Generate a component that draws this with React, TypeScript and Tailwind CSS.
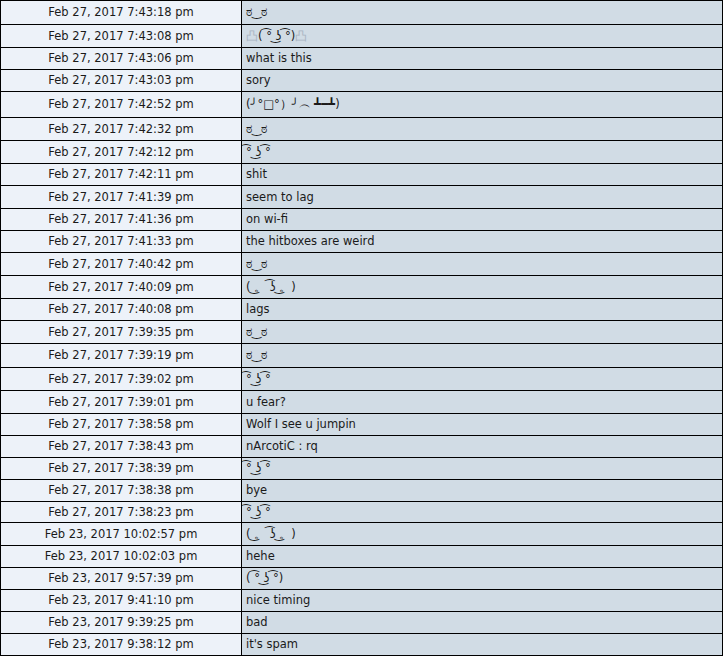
import React from 'react';

type Row = { at: string; msg: React.ReactNode; h: number };

const Faint = ({ children }: { children: React.ReactNode }) => (
  <span className="text-[#a9b4c2]">{children}</span>
);

const rows: Row[] = [
  { at: 'Feb 27, 2017 7:43:18 pm', msg: 'ಠ‿ಠ', h: 24 },
  {
    at: 'Feb 27, 2017 7:43:08 pm',
    msg: (
      <>
        <Faint>凸</Faint>( ͡° ͜ʖ ͡°)<Faint>凸</Faint>
      </>
    ),
    h: 23,
  },
  { at: 'Feb 27, 2017 7:43:06 pm', msg: 'what is this', h: 22 },
  { at: 'Feb 27, 2017 7:43:03 pm', msg: 'sory', h: 22 },
  { at: 'Feb 27, 2017 7:42:52 pm', msg: '(╯°□°）╯︵ ┻━┻)', h: 26 },
  { at: 'Feb 27, 2017 7:42:32 pm', msg: 'ಠ‿ಠ', h: 23 },
  { at: 'Feb 27, 2017 7:42:12 pm', msg: '͡° ͜ʖ ͡°', h: 23 },
  { at: 'Feb 27, 2017 7:42:11 pm', msg: 'shit', h: 22 },
  { at: 'Feb 27, 2017 7:41:39 pm', msg: 'seem to lag', h: 23 },
  { at: 'Feb 27, 2017 7:41:36 pm', msg: 'on wi-fi', h: 22 },
  { at: 'Feb 27, 2017 7:41:33 pm', msg: 'the hitboxes are weird', h: 22 },
  { at: 'Feb 27, 2017 7:40:42 pm', msg: 'ಠ‿ಠ', h: 23 },
  { at: 'Feb 27, 2017 7:40:09 pm', msg: '( ͜。 ͡ʖ ͜。)', h: 23 },
  { at: 'Feb 27, 2017 7:40:08 pm', msg: 'lags', h: 22 },
  { at: 'Feb 27, 2017 7:39:35 pm', msg: 'ಠ‿ಠ', h: 23 },
  { at: 'Feb 27, 2017 7:39:19 pm', msg: 'ಠ‿ಠ', h: 24 },
  { at: 'Feb 27, 2017 7:39:02 pm', msg: '͡° ͜ʖ ͡°', h: 23 },
  { at: 'Feb 27, 2017 7:39:01 pm', msg: 'u fear?', h: 23 },
  { at: 'Feb 27, 2017 7:38:58 pm', msg: 'Wolf I see u jumpin', h: 22 },
  { at: 'Feb 27, 2017 7:38:43 pm', msg: 'nArcotiC : rq', h: 22 },
  { at: 'Feb 27, 2017 7:38:39 pm', msg: '͡° ͜ʖ ͡°', h: 22 },
  { at: 'Feb 27, 2017 7:38:38 pm', msg: 'bye', h: 22 },
  { at: 'Feb 27, 2017 7:38:23 pm', msg: '͡° ͜ʖ ͡°', h: 21 },
  { at: 'Feb 23, 2017 10:02:57 pm', msg: '( ͜。 ͡ʖ ͜。)', h: 23 },
  { at: 'Feb 23, 2017 10:02:03 pm', msg: 'hehe', h: 22 },
  { at: 'Feb 23, 2017 9:57:39 pm', msg: '( ͡° ͜ʖ ͡°)', h: 22 },
  { at: 'Feb 23, 2017 9:41:10 pm', msg: 'nice timing', h: 22 },
  { at: 'Feb 23, 2017 9:39:25 pm', msg: 'bad', h: 22 },
  { at: 'Feb 23, 2017 9:38:12 pm', msg: "it's spam", h: 22 },
];

function App() {
  return (
    <div className="w-[723px] border-t border-x border-black font-['DejaVu_Sans',Verdana,sans-serif] text-[11.5px] text-[#1a1a1a]">
      {rows.map((r, i) => (
        <div
          key={i}
          className="grid grid-cols-[241px_1fr] border-b border-black"
          style={{ height: r.h }}
        >
          <div className="flex items-center justify-center pt-[1px] bg-[#edf2f9] border-r border-black whitespace-nowrap">
            {r.at}
          </div>
          <div className="flex items-center pt-[1px] bg-[#d1dce5] pl-[4px] whitespace-nowrap overflow-hidden">
            {r.msg}
          </div>
        </div>
      ))}
    </div>
  );
}

export default App;
